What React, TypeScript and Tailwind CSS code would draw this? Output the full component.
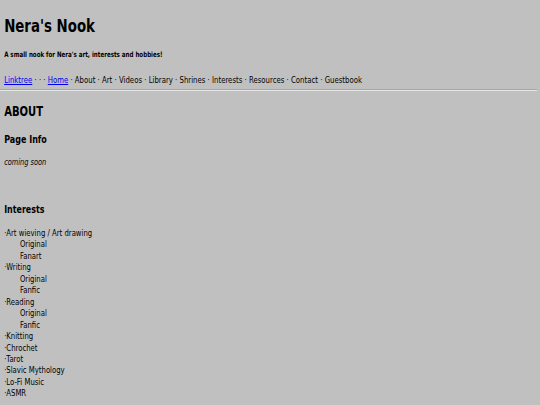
const navLinks = ["About", "Art", "Videos", "Library", "Shrines", "Interests", "Resources", "Contact", "Guestbook"];

const interests: { name: string; sub?: string[] }[] = [
  { name: "Art wieving / Art drawing", sub: ["Original", "Fanart"] },
  { name: "Writing", sub: ["Original", "Fanfic"] },
  { name: "Reading", sub: ["Original", "Fanfic"] },
  { name: "Knitting" },
  { name: "Chrochet" },
  { name: "Tarot" },
  { name: "Slavic Mythology" },
  { name: "Lo-Fi Music" },
  { name: "ASMR" },
];

export default function App() {
  return (
    <div className="min-h-[405px] w-[540px] bg-[#c0c0c0] pt-[14px] text-black font-['DejaVu_Sans',sans-serif]">
      {/* header: DejaVu squeezed to read as the condensed cut */}
      <header className="pl-[5.5px] origin-left [transform:scaleX(0.75)]">
        <h1 className="text-[17.8px] font-bold leading-[24px]">Nera's Nook</h1>
        <p className="mt-[12px] text-[7.4px] font-bold leading-[9px]">A small nook for Nera's art, interests and hobbies!</p>

        <nav className="mt-[15px] text-[9.25px] leading-[11px] whitespace-nowrap">
          <a href="#" className="text-[#0000ee] underline">Linktree</a>
          <span> · · · </span>
          <a href="#" className="text-[#0000ee] underline">Home</a>
          {navLinks.map((l) => (
            <span key={l}> · {l}</span>
          ))}
        </nav>
      </header>
      <hr className="mt-[4px] mr-[3px] border-t border-b border-t-[#a8a8a8] border-b-[#e4e4e4]" />

      <main className="pl-[5.5px] origin-left [transform:scaleX(0.75)]">
        <h2 className="mt-[12px] text-[13.4px] font-bold leading-[18px]">ABOUT</h2>
        <h3 className="mt-[12px] text-[10.7px] font-bold leading-[14px]">Page Info</h3>
        <p className="mt-[10px] text-[8.8px] italic leading-[11px]">coming soon</p>

        <h3 className="mt-[34px] text-[10.6px] font-bold leading-[14px]">Interests</h3>
        <ul className="mt-[11px] text-[9.2px] leading-[11.45px]">
          {interests.map((it) => (
            <li key={it.name}>
              <div>·{it.name}</div>
              {it.sub?.map((s) => (
                <div key={s} className="pl-[21px]">{s}</div>
              ))}
            </li>
          ))}
        </ul>
      </main>
    </div>
  );
}
